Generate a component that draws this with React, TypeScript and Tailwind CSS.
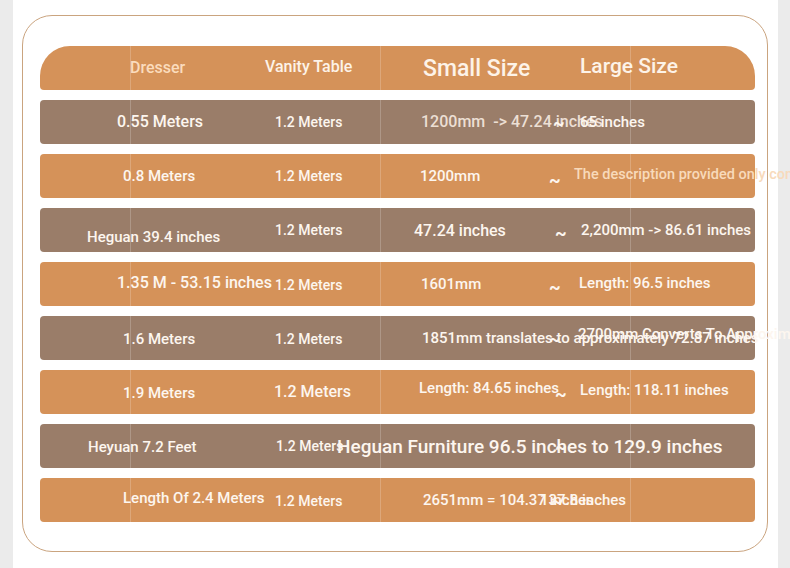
import React from "react";

type Cell = { t: string; c?: string };
type RowData = {
	bg: string;
	c1: Cell;
	c2: Cell;
	c3: Cell;
	tilde?: string;
	c5?: Cell;
};

const ORANGE = "bg-[#d59259]";
const BROWN = "bg-[#9a7d69]";

const rows: RowData[] = [
	{
		bg: BROWN,
		c1: { t: "0.55 Meters", c: "pl-[77px] text-[16px]" },
		c2: { t: "1.2 Meters", c: "text-[14px]" },
		c3: { t: "1200mm  -> 47.24 inches", c: "pl-[1px] text-[16px] text-[#ecdfd4]" },
		tilde: "pl-[4px]",
		c5: { t: "65 inches", c: "pl-[2px]" },
	},
	{
		bg: ORANGE,
		c1: { t: "0.8 Meters", c: "pl-[83px]" },
		c2: { t: "1.2 Meters", c: "text-[14px]" },
		c3: { t: "1200mm" },
		tilde: "translate-y-[3px]",
		c5: { t: "The description provided only contains approximate dimensions", c: "ml-[-4px] -translate-y-[2px] text-[14.5px] text-[#f8dabb]" },
	},
	{
		bg: BROWN,
		c1: { t: "Heguan 39.4 inches", c: "pl-[47px] translate-y-[7px]" },
		c2: { t: "1.2 Meters", c: "text-[14px]" },
		c3: { t: "47.24 inches", c: "ml-[-6px] text-[16px] translate-y-[1px]" },
		tilde: "pl-[6px] translate-y-[2px]",
		c5: { t: "2,200mm -> 86.61 inches", c: "pl-[3px]" },
	},
	{
		bg: ORANGE,
		c1: { t: "1.35 M - 53.15 inches", c: "pl-[77px] text-[16px] -translate-y-[1px]" },
		c2: { t: "1.2 Meters", c: "text-[14px] translate-y-[1px]" },
		c3: { t: "1601mm", c: "pl-[1px]" },
		tilde: "translate-y-[2px]",
		c5: { t: "Length: 96.5 inches", c: "pl-[1px] -translate-y-[1px]" },
	},
	{
		bg: BROWN,
		c1: { t: "1.6 Meters", c: "pl-[83px] translate-y-[1px]" },
		c2: { t: "1.2 Meters", c: "text-[14px] translate-y-[1px]" },
		c3: { t: "1851mm translates to approximately 72.87 inches", c: "pl-[2px]" },
		tilde: "",
		c5: { t: "2700mm Converts To Approximately 106.3 inches", c: "-translate-y-[4px]" },
	},
	{
		bg: ORANGE,
		c1: { t: "1.9 Meters", c: "pl-[83px] translate-y-[1px]" },
		c2: { t: "1.2 Meters", c: "ml-[-1px] text-[16px]" },
		c3: { t: "Length: 84.65 inches", c: "ml-[-1px] -translate-y-[4px]" },
		tilde: "pl-[6px] translate-y-[1px]",
		c5: { t: "Length: 118.11 inches", c: "pl-[2px] -translate-y-[2px]" },
	},
	{
		bg: BROWN,
		c1: { t: "Heyuan 7.2 Feet", c: "pl-[48px] translate-y-[1px]" },
		c2: { t: "1.2 Meters", c: "pl-[1px] text-[14px]" },
		c3: { t: "Heguan Furniture 96.5 inches to 129.9 inches", c: "ml-[-83px] text-[19px] translate-y-[1px]" },
		tilde: "pl-[6px]",
	},
	{
		bg: ORANGE,
		c1: { t: "Length Of 2.4 Meters", c: "pl-[83px] -translate-y-[2px]" },
		c2: { t: "1.2 Meters", c: "text-[14px] translate-y-[1px]" },
		c3: { t: "2651mm = 104.37 inches", c: "pl-[3px]" },
		tilde: "pl-[2px]",
		c5: { t: "137.8 inches", c: "ml-[-38px]" },
	},
];

function Row({ r }: { r: RowData }) {
	return (
		<div className={`flex h-[44px] items-center rounded-[4px] text-[15px] font-medium text-[#fdf6ef] ${r.bg}`}>
			<div className="w-[235px] shrink-0 whitespace-nowrap">
				<span className={`inline-block ${r.c1.c ?? ""}`}>{r.c1.t}</span>
			</div>
			<div className="w-[145px] shrink-0 whitespace-nowrap">
				<span className={`inline-block ${r.c2.c ?? ""}`}>{r.c2.t}</span>
			</div>
			<div className="w-[129px] shrink-0 whitespace-pre">
				<span className={`inline-block ${r.c3.c ?? ""}`}>{r.c3.t}</span>
			</div>
			<div className="w-[29px] shrink-0">
				<span className={`inline-block text-[18px] font-bold ${r.tilde ?? ""}`}>~</span>
			</div>
			<div className="w-[177px] shrink-0 whitespace-nowrap">
				{r.c5 && <span className={`inline-block ${r.c5.c ?? ""}`}>{r.c5.t}</span>}
			</div>
		</div>
	);
}

export default function App() {
	return (
		<div className="flex h-[568px] w-[790px] overflow-hidden bg-[#ebebeb] font-['Roboto',sans-serif]">
			<div className="ml-[13px] w-[765px] shrink-0 bg-white pl-[9px] pt-[15px]">
				<div className="h-[537px] w-[746px] rounded-[30px] border border-[#caa47f] pl-[17px] pt-[30px]">
					<div className="relative flex w-[715px] flex-col gap-[10px]">
						{/* header */}
						<div className="flex h-[44px] items-center rounded-b-[4px] rounded-t-[30px] bg-[#d59259] font-medium text-[#fdf3e8]">
							<div className="w-[235px] shrink-0 whitespace-nowrap">
								<span className="inline-block pl-[90px] text-[16px] text-[#fbdcbd]">Dresser</span>
							</div>
							<div className="w-[145px] shrink-0 whitespace-nowrap">
								<span className="ml-[-10px] inline-block -translate-y-[1px] text-[16px]">Vanity Table</span>
							</div>
							<div className="w-[158px] shrink-0 whitespace-nowrap">
								<span className="inline-block translate-y-[1px] pl-[3px] text-[23px]">Small Size</span>
							</div>
							<div className="flex-1 whitespace-nowrap">
								<span className="inline-block -translate-y-[1px] pl-[2px] text-[21px]">Large Size</span>
							</div>
						</div>

						{rows.map((r, i) => (
							<Row key={i} r={r} />
						))}

						{/* faint guide lines over the table */}
						<div className="pointer-events-none absolute bottom-0 left-[90px] top-0 w-px bg-white/20" />
						<div className="pointer-events-none absolute bottom-0 left-[340px] top-0 w-px bg-white/20" />
						<div className="pointer-events-none absolute bottom-0 left-[590px] top-0 w-px bg-white/20" />
					</div>
				</div>
			</div>
			<div className="flex-1" />
		</div>
	);
}
